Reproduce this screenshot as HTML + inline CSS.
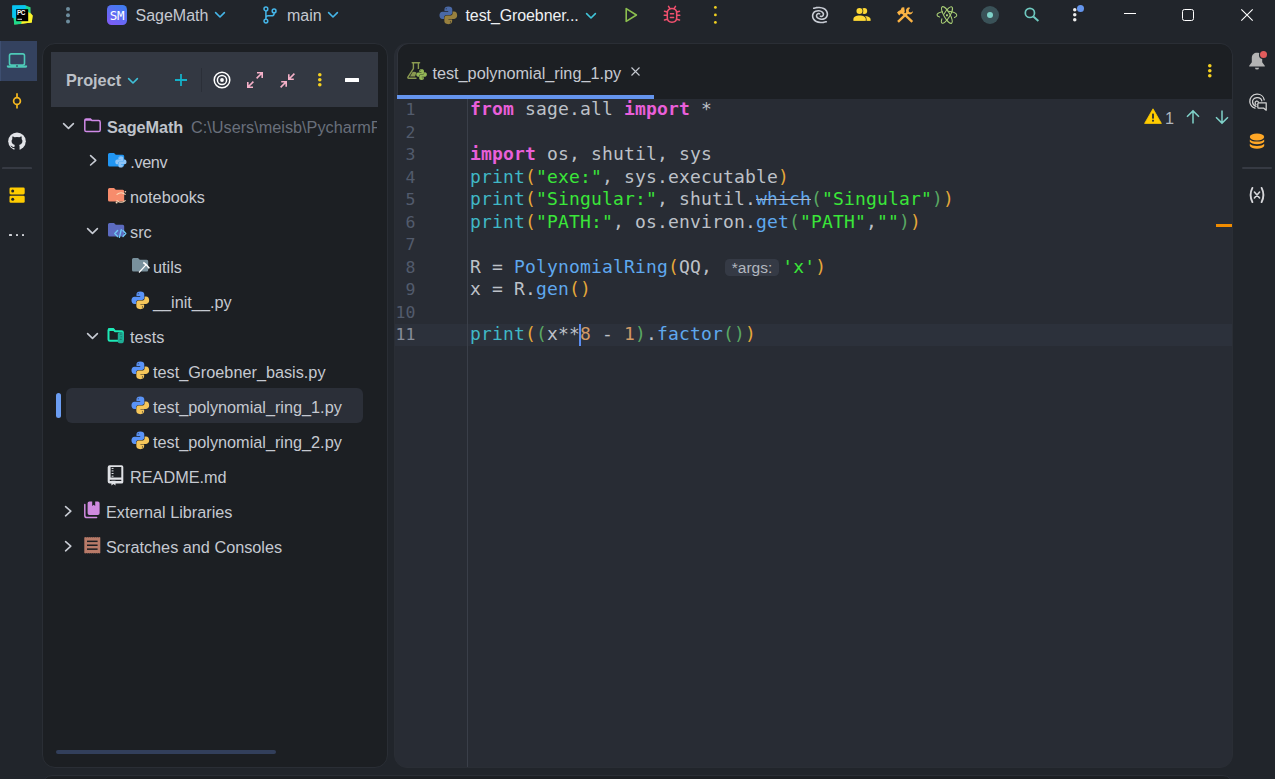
<!DOCTYPE html>
<html lang="en">
<head>
<meta charset="utf-8">
<title>SageMath – test_polynomial_ring_1.py</title>
<style>
*{box-sizing:border-box;margin:0;padding:0}
html,body{width:1275px;height:779px;overflow:hidden;background:#21252b}
body{position:relative;font-family:"Liberation Sans",Arial,sans-serif;font-size:16.25px;color:#c5c9d1;-webkit-font-smoothing:antialiased}
.abs{position:absolute}
.t{position:absolute;white-space:nowrap;line-height:20px;height:20px}
svg{position:absolute;overflow:visible}
/* panels */
#proj{position:absolute;left:42px;top:43px;width:346px;height:725px;background:#1c1f23;border:1px solid #2a2e35;border-radius:13px}
#projhead{position:absolute;left:51px;top:52px;width:327px;height:55px;background:#333842}
#edit{position:absolute;left:394px;top:43px;width:839px;height:725px;background:#282c34;border:1px solid #2a2e35;border-radius:13px;overflow:hidden}
#tabbar{position:absolute;left:2px;top:-1px;width:836px;height:56px;background:#1c1f23;border:1px solid #30343c;border-bottom:0;border-radius:12px 12px 0 0}
#bottom{position:absolute;left:42px;top:775px;width:1191px;height:20px;background:#1c1f23;border:1px solid #2a2e35;border-radius:13px}
.row{position:absolute;left:0;height:35px;width:100%}
.code{font-family:"DejaVu Sans Mono","Liberation Mono",monospace;font-size:18px;letter-spacing:0.163px;color:#bdc1c8}
.ln{position:absolute;left:380px;width:35.5px;text-align:right;font-family:"DejaVu Sans Mono","Liberation Mono",monospace;font-size:16.5px;letter-spacing:.07px;height:22px;line-height:24.600px;white-space:nowrap}
.cl{position:absolute;left:470px;height:22px;line-height:22px;white-space:pre}
.hint{display:inline-block;vertical-align:top;width:54px;height:17px;margin:3px 3.2px 0 2px;background:#353a45;border-radius:4.5px;font-family:"Liberation Sans",Arial,sans-serif;font-size:15.5px;letter-spacing:0;line-height:17.5px;text-align:center;color:#b2b7bf}
.k{color:#e95fd9;font-weight:bold}
.f{color:#40b8c6}
.s{color:#3ae639}
.m{color:#5fa8ee}
.n{color:#d19a66}
.b1{color:#e5a83a}
.b2{color:#5aa863}
</style>
</head>
<body>
<!-- ===== tool window panels ===== -->
<div id="proj"></div>
<div id="projhead"></div>
<div id="edit"><div id="tabbar"></div></div>
<div id="bottom"></div>

<!-- ===== left stripe ===== -->
<div class="abs" style="left:0;top:41px;width:37px;height:40px;background:#34425f"></div>
<div class="abs" style="left:0;top:41px;width:1px;height:40px;background:#3d4e70"></div>
<div class="abs" style="left:2px;top:168px;width:30px;height:1px;background:#353a43"></div>
<svg style="left:6px;top:52px" width="22" height="17" viewBox="0 0 22 17" ><rect x="3.5" y="1.9" width="15" height="11.2" rx="1.8" fill="none" stroke="#4ec9b8" stroke-width="1.6"/><path d="M.9 13.4H21.1V14.2Q21.1 15.7 19.4 15.7H2.6Q.9 15.7 .9 14.2Z" fill="#4ec9b8"/><rect x="10" y="13.4" width="2" height="1.2" fill="#34425f"/></svg>
<svg style="left:10px;top:92px" width="14" height="18" viewBox="0 0 14 18" ><circle cx="7" cy="9" r="3.4" fill="none" stroke="#f5b81f" stroke-width="1.7"/><path d="M7 1.2V5.2M7 12.8V16.6" stroke="#f5b81f" stroke-width="1.7" fill="none"/></svg>
<svg style="left:8px;top:132px" width="18" height="18" viewBox="0 0 18 18" ><circle cx="9" cy="9.2" r="8.8" fill="#e2e4e8"/><path d="M5.2 4.6L6.9 5.6Q9 5.1 11.1 5.6L12.8 4.6Q13.3 6 13 7.1Q14 8.4 13.6 10.2Q13 12.3 10.9 12.8Q11.3 13.6 11.2 14.6V18H6.8V15.6Q5 16 4.3 14.6Q3.9 13.8 3.2 13.5Q4.4 13.2 5 14.1Q5.7 15 6.8 14.6Q6.8 13.4 7.1 12.8Q5 12.3 4.4 10.2Q4 8.4 5 7.1Q4.7 6 5.2 4.6Z" fill="#21252b" transform="translate(9 9.5) scale(1.16 1.06) translate(-9 -9.5)"/></svg>
<div class="abs" style="left:2px;top:167px;width:30px;height:2px;background:#363a43;border-radius:1px"></div>
<svg style="left:9px;top:187px" width="16" height="16" viewBox="0 0 16 16" ><rect x=".5" y=".4" width="15.2" height="7" rx="1.3" fill="#ffcc00"/><rect x=".5" y="8.8" width="15.2" height="7" rx="1.3" fill="#ffcc00"/><circle cx="3.7" cy="3.9" r="1.5" fill="#21252b"/><circle cx="3.7" cy="12.3" r="1.5" fill="#21252b"/></svg>
<div class="abs" style="left:9.4px;top:234px;width:2.4px;height:2.4px;background:#d0d3d8;border-radius:.6px"></div>
<div class="abs" style="left:15.8px;top:234px;width:2.4px;height:2.4px;background:#d0d3d8;border-radius:.6px"></div>
<div class="abs" style="left:22px;top:234px;width:2.4px;height:2.4px;background:#d0d3d8;border-radius:.6px"></div>


<!-- ===== title bar ===== -->
<svg style="left:12px;top:5px" width="21" height="21" viewBox="0 0 21 21" ><defs><linearGradient id="pcg" x1="0" y1="0" x2="1" y2="1"><stop offset="0" stop-color="#07c3f2"/><stop offset=".45" stop-color="#21d789"/><stop offset=".75" stop-color="#fcf52a"/><stop offset="1" stop-color="#fcf52a"/></linearGradient></defs>
<path d="M.3 .4L13.2 .2L18.3 2.3V7.5L20.6 10.5L19.8 17.6L2.2 19.6L1.7 13.2L.3 12.6Z" fill="url(#pcg)"/>
<path d="M.3 .4L13.2 .2L14.5 2.5L4 13.5L.3 12.6Z" fill="#07c3f2"/>
<path d="M14.5 2L18.3 2.3V8L14 6Z" fill="#21d789"/>
<path d="M16 7L20.6 10.5L19.8 17.6L9 18.8Z" fill="#fcf52a"/>
<path d="M1.7 13L9.5 17.2L9 18.9L2.2 19.6Z" fill="#1fd98a"/>
<rect x="4.2" y="4.2" width="12" height="12" fill="#000"/>
<rect x="5.4" y="13.8" width="4.6" height=".9" fill="#fff"/>
<text x="5.1" y="10.3" font-family="Liberation Sans,sans-serif" font-weight="bold" font-size="6.4" letter-spacing="-.5" fill="#fff">PC</text></svg>
<svg style="left:65.4px;top:6.3px" width="6" height="18.6" viewBox="0 0 6 18.6" ><circle cx="3" cy="3" r="2" fill="#6d8d9e"/><circle cx="3" cy="9.3" r="2" fill="#6d8d9e"/><circle cx="3" cy="15.6" r="2" fill="#6d8d9e"/></svg>
<div class="abs" style="left:107px;top:5px;width:20px;height:20px;border-radius:4.5px;background:linear-gradient(30deg,#7d5df6 10%,#3f7cf0 90%)"></div>
<div class="t" style="left:107px;top:5px;width:20px;text-align:center;font-family:'DejaVu Sans Mono','Liberation Mono',monospace;font-size:12.5px;color:#fff;letter-spacing:-.4px;line-height:21px">SM</div>
<div class="t" id="t_sage" style="left:135.500px;top:6px;font-size:16px;color:#c5c9d1">SageMath</div>
<svg style="left:215.2px;top:12.3px" width="10" height="5.6" viewBox="0 0 10 5.6" ><path d="M.6 .6L5 5L9.4 .6" fill="none" stroke="#45b5e8" stroke-width="1.6" stroke-linecap="round" stroke-linejoin="round"/></svg>
<svg style="left:262px;top:6px" width="16" height="18" viewBox="0 0 16 18" ><g fill="none" stroke="#45b5e8" stroke-width="1.5"><circle cx="3.9" cy="3" r="1.9"/><circle cx="3.9" cy="15.1" r="1.9"/><circle cx="12.1" cy="4.9" r="1.9"/><path d="M3.9 4.9V13.2M12.1 6.8V7.4Q12.1 9.8 9.7 9.8H6.3Q3.9 9.8 3.9 12"/></g></svg>
<div class="t" id="t_main" style="left:287px;top:6px;font-size:16px;color:#c5c9d1">main</div>
<svg style="left:328.2px;top:12.3px" width="10" height="5.6" viewBox="0 0 10 5.6" ><path d="M.6 .6L5 5L9.4 .6" fill="none" stroke="#45b5e8" stroke-width="1.6" stroke-linecap="round" stroke-linejoin="round"/></svg>
<svg style="left:439.04px;top:6.04px" width="18.63" height="18.63" viewBox="0 0 16 16" ><path fill-rule="evenodd" fill="#4a69a6" d="M8 .4C5.6 .4 4.7 1.4 4.7 2.8V4.3H7.9V4.9H3C1.4 4.9 .4 6.2 .4 8C.4 9.8 1.4 11.2 3 11.2H4.3V9.8C4.3 8.5 5.3 7.75 6.6 7.75H9.4C10.6 7.75 11.4 6.9 11.4 5.6V2.8C11.4 1.4 10.4 .4 8 .4ZM6.2 1.9A.45 .45 0 1 1 6.2 2.8A.45 .45 0 1 1 6.2 1.9Z"/><path fill-rule="evenodd" fill="#98803e" d="M8 15.6C10.4 15.6 11.3 14.6 11.3 13.2V11.7H8.1V11.1H13C14.6 11.1 15.6 9.8 15.6 8C15.6 6.2 14.6 4.8 13 4.8H11.7V6.2C11.7 7.5 10.7 8.25 9.4 8.25H6.6C5.4 8.25 4.6 9.1 4.6 10.4V13.2C4.6 14.6 5.6 15.6 8 15.6ZM9.8 14.1A.45 .45 0 1 1 9.8 13.2A.45 .45 0 1 1 9.8 14.1Z"/></svg>
<div class="t" id="t_run" style="left:465.500px;top:6px;letter-spacing:-.1px;font-size:16px;color:#eef0f3">test_Groebner...</div>
<svg style="left:586px;top:13px" width="10" height="5.6" viewBox="0 0 10 5.6" ><path d="M.6 .6L5 5L9.4 .6" fill="none" stroke="#40c4d8" stroke-width="1.6" stroke-linecap="round" stroke-linejoin="round"/></svg>
<svg style="left:624px;top:7px" width="14" height="16" viewBox="0 0 14 16" ><path d="M2.2 1.6L12.4 8L2.2 14.4Z" fill="none" stroke="#8cbf4f" stroke-width="1.6" stroke-linejoin="round"/></svg>
<svg style="left:663px;top:5px" width="18" height="19" viewBox="0 0 18 19" ><g fill="none" stroke="#f0506e" stroke-width="1.500" stroke-linecap="round"><path d="M9 3.400C11.800 3.400 13.700 5.400 13.700 8.200V12.600C13.700 15.400 11.800 17.300 9 17.300C6.200 17.300 4.300 15.400 4.300 12.600V8.200C4.300 5.400 6.200 3.400 9 3.400Z"/><path d="M7 3.600L5.500 1.300M11 3.600L12.500 1.300M4.300 7L1.500 6.200M4.300 10.200H1.200M4.300 14.200L1.500 15M13.700 7L16.500 6.200M13.700 10.200H16.800M13.700 14.200L16.500 15M7.400 8.700H10.600M7.400 12.400H10.600"/></g></svg>
<svg style="left:712.6px;top:5.1px" width="4.8" height="19.8" viewBox="0 0 4.8 19.8" ><circle cx="2.4" cy="2.4" r="1.4" fill="#f0d020"/><circle cx="2.4" cy="9.9" r="1.4" fill="#f0d020"/><circle cx="2.4" cy="17.4" r="1.4" fill="#f0d020"/></svg>
<svg style="left:811px;top:6px" width="18" height="18" viewBox="0 0 18 18" ><path d="M2.70 2.30C3.08 2.20 4.07 1.83 5.00 1.70C5.93 1.57 7.02 1.37 8.30 1.50C9.58 1.63 11.53 1.97 12.70 2.50C13.87 3.03 14.68 3.78 15.30 4.70C15.92 5.62 16.37 6.95 16.40 8.00C16.43 9.05 16.02 10.20 15.50 11.00C14.98 11.80 14.22 12.43 13.30 12.80C12.38 13.17 11.05 13.30 10.00 13.20C8.95 13.10 7.73 12.70 7.00 12.20C6.27 11.70 5.77 10.83 5.60 10.20C5.43 9.57 5.70 8.85 6.00 8.40C6.30 7.95 6.97 7.60 7.40 7.50C7.83 7.40 8.40 7.75 8.60 7.80M15.30 15.70C14.92 15.80 13.93 16.17 13.00 16.30C12.07 16.43 10.98 16.63 9.70 16.50C8.42 16.37 6.47 16.03 5.30 15.50C4.13 14.97 3.32 14.22 2.70 13.30C2.08 12.38 1.63 11.05 1.60 10.00C1.57 8.95 1.98 7.80 2.50 7.00C3.02 6.20 3.78 5.57 4.70 5.20C5.62 4.83 6.95 4.70 8.00 4.80C9.05 4.90 10.27 5.30 11.00 5.80C11.73 6.30 12.23 7.17 12.40 7.80C12.57 8.43 12.30 9.15 12.00 9.60C11.70 10.05 11.03 10.40 10.60 10.50C10.17 10.60 9.60 10.25 9.40 10.20" fill="none" stroke="#c8ccd4" stroke-width="1.6" stroke-linecap="round" stroke-linejoin="round"/></svg>
<svg style="left:853px;top:7px" width="18" height="15" viewBox="0 0 18 15" ><g fill="#fdd835"><circle cx="11.300" cy="4" r="2.900"/><path d="M10.500 8.900C14.500 8.700 17.600 10.100 17.600 12.400V13.900H10.500Z"/><g stroke="#21252b" stroke-width="1.500" paint-order="stroke"><circle cx="6.500" cy="4" r="3.050"/><path d="M.4 13.900V12.200C.4 10 3 8.600 6.600 8.600C10.200 8.600 12.800 10 12.800 12.200V13.900Z"/></g><rect x="0" y="13.9" width="18" height="1.100" fill="#21252b"/></g></svg>
<svg style="left:896px;top:6px" width="18" height="18" viewBox="0 0 18 18" ><g fill="none" stroke="#fbb344" stroke-linecap="butt"><path d="M2 15.900L11.600 6.600" stroke-width="2.400"/><path d="M16.300 15.900L6.400 6.400" stroke-width="2.400"/></g><path d="M1 6.400L3.200 9.400L5 7.600L6.600 8.200L8.800 5.400L8.200 1.300L5.800 1.600L4.600 4L2.600 5Z" fill="#fbb344"/><path d="M13.200 1.200A3.300 3.300 0 0 0 10.400 6.200L12.200 8A3.300 3.300 0 0 0 17 5.200L15 6.400L13 6L12.600 4L13.900 2.200Q13.600 1.200 13.200 1.200Z" fill="#fbb344"/></svg>
<svg style="left:936px;top:5px" width="22" height="20" viewBox="0 0 22 20" ><g fill="none" stroke="#a9cf76" stroke-width="1.050" stroke-linecap="round"><ellipse cx="10.900" cy="10" rx="3" ry="9.500" transform="rotate(-30 10.900 10)"/><ellipse cx="10.900" cy="10" rx="3" ry="9.500" transform="rotate(31 10.900 10)" stroke-dasharray="15 5 40 0"/><path d="M6.400 6.700C3.400 7.300 1 8.600 1 9.900C1 10.700 2 11.400 3.600 12M12 6.300C16.500 6.700 20.600 8.200 20.800 10.200C20.800 11.200 19.800 12 18.400 12.600"/></g><rect x="10" y="9.300" width="1.900" height="1.900" rx=".5" fill="#b0d878"/></svg>
<div class="abs" style="left:981px;top:6px;width:18px;height:18px;border-radius:50%;background:#3a5258"></div><div class="abs" style="left:986.7px;top:11.7px;width:6.6px;height:6.6px;border-radius:50%;background:#7fd1c8"></div>
<svg style="left:1023px;top:7px" width="18" height="17" viewBox="0 0 18 17" ><g fill="none" stroke="#6fc9c0" stroke-linecap="butt"><circle cx="6.900" cy="5.900" r="4.600" stroke-width="1.700"/><path d="M10.300 9.400L15.400 13.900" stroke-width="2"/></g></svg>
<svg style="left:1072.25px;top:7.25px" width="5.5" height="15.5" viewBox="0 0 5.5 15.5" ><circle cx="2.75" cy="2.75" r="1.75" fill="#ececec"/><circle cx="2.75" cy="7.75" r="1.75" fill="#ececec"/><circle cx="2.75" cy="12.75" r="1.75" fill="#ececec"/></svg>
<div class="abs" style="left:1076.600px;top:4.200px;width:8.600px;height:8.600px;border-radius:50%;background:#21252b"></div>
<div class="abs" style="left:1077.300px;top:4.900px;width:7.200px;height:7.200px;border-radius:50%;background:#6495ed"></div>
<div class="abs" style="left:1124px;top:13px;width:12px;height:1px;background:#fff"></div>
<div class="abs" style="left:1182px;top:9px;width:12px;height:12px;border:1.2px solid #fff;border-radius:2.5px"></div>
<svg style="left:1241px;top:9px" width="12" height="12" viewBox="0 0 12 12" ><path d="M.3 .3L11.7 11.7M11.7 .3L.3 11.7" stroke="#fff" stroke-width="1.1" fill="none"/></svg>


<!-- ===== project header ===== -->
<div class="t" id="t_proj" style="left:66px;top:70px;font-weight:bold;color:#bcc0c7">Project</div>
<svg style="left:128px;top:78.2px" width="10" height="5.6" viewBox="0 0 10 5.6" ><path d="M.6 .6L5 5L9.4 .6" fill="none" stroke="#3fc0d8" stroke-width="1.6" stroke-linecap="round" stroke-linejoin="round"/></svg>
<svg style="left:175px;top:74px" width="12" height="12" viewBox="0 0 12 12" ><path d="M6 0V12M0 6H12" stroke="#14b0c8" stroke-width="1.8" fill="none"/></svg>
<div class="abs" style="left:201px;top:68px;width:1px;height:24px;background:#2b2f38"></div>
<svg style="left:213px;top:71px" width="18" height="18" viewBox="0 0 18 18" ><g fill="none" stroke="#fff" stroke-width="1.5"><circle cx="9" cy="9" r="7.8"/><circle cx="9" cy="9" r="4.6"/></g><circle cx="9" cy="9" r="1.9" fill="#fff"/></svg>
<svg style="left:247px;top:72px" width="16" height="16" viewBox="0 0 16 16" ><g fill="none" stroke="#f5b0c8" stroke-width="1.6"><path d="M9.6 6.4L15.2 .8M10 .8H15.2V6M6.4 9.6L.8 15.2M.8 10V15.2H6"/></g></svg>
<svg style="left:279.5px;top:72.5px" width="15" height="15" viewBox="0 0 15 15" ><g fill="none" stroke="#f5b0c8" stroke-width="1.6"><path d="M14.4 .6L8.8 6.2M8.8 1.2V6.2H13.8M.6 14.4L6.2 8.8M1.2 8.8H6.2V13.8"/></g></svg>
<svg style="left:317.2px;top:72.2px" width="5.6" height="15.6" viewBox="0 0 5.6 15.6" ><circle cx="2.8" cy="2.8" r="1.8" fill="#f5d020"/><circle cx="2.8" cy="7.8" r="1.8" fill="#f5d020"/><circle cx="2.8" cy="12.8" r="1.8" fill="#f5d020"/></svg>
<div class="abs" style="left:345px;top:78px;width:14px;height:4px;background:#fff;border-radius:.5px"></div>


<!-- ===== project tree ===== -->
<div class="abs" style="left:66px;top:388px;width:297px;height:35px;background:#2b2f38;border-radius:6px"></div>
<div class="abs" style="left:56px;top:393px;width:5px;height:25px;background:#6b9df2;border-radius:2.5px"></div>
<svg style="left:63px;top:122.8px" width="11" height="6" viewBox="0 0 11 6" ><path d="M.6 .6L5.5 5.4L10.4 .6" fill="none" stroke="#c8ccd4" stroke-width="1.6" stroke-linecap="round" stroke-linejoin="round"/></svg>
<svg style="left:83.5px;top:118px" width="17.5" height="14.5" viewBox="0 0 17.5 14.5" ><path d="M2.2 .9H6.4L7.9 2.6H14.6Q16.2 2.6 16.2 4.2V12Q16.2 13.6 14.6 13.6H2.4Q.8 13.6 .8 12V2.3Q.8 .9 2.2 .9Z" fill="none" stroke="#d08ae8" stroke-width="1.5"/><path d="M1 1H6.6L8 2.8H1Z" fill="#d08ae8"/></svg>
<div class="t" style="left:107px;top:117px;font-weight:bold;color:#bfc3cb;letter-spacing:-.08px">SageMath</div>
<div class="t" style="left:191px;top:117px;color:#696f7b;width:185.500px;overflow:hidden">C:\Users\meisb\PycharmProjects\SageMath</div>
<svg style="left:89.5px;top:155.2px" width="6.4" height="10.6" viewBox="0 0 6.4 10.6" ><path d="M.6 .6L5.8 5.3L.6 10" fill="none" stroke="#c8ccd4" stroke-width="1.6" stroke-linecap="round" stroke-linejoin="round"/></svg>
<svg style="left:107.6px;top:153.2px" width="16.7" height="13.5" viewBox="0 0 16.7 13.5" ><path d="M1.5 0H6L7.8 1.8H14.7Q16.2 1.8 16.2 3.3V12Q16.2 13.5 14.7 13.5H1.5Q0 13.5 0 12V1.5Q0 0 1.5 0Z" fill="#2196f3"/></svg>
<svg style="left:114.725px;top:156.125px" width="11.799" height="11.799" viewBox="0 0 16 16" ><path fill-rule="evenodd" fill="#8ec5f8" d="M8 .4C5.6 .4 4.7 1.4 4.7 2.8V4.3H7.9V4.9H3C1.4 4.9 .4 6.2 .4 8C.4 9.8 1.4 11.2 3 11.2H4.3V9.8C4.3 8.5 5.3 7.75 6.6 7.75H9.4C10.6 7.75 11.4 6.9 11.4 5.6V2.8C11.4 1.4 10.4 .4 8 .4ZM6.2 1.9A.45 .45 0 1 1 6.2 2.8A.45 .45 0 1 1 6.2 1.9Z"/><path fill-rule="evenodd" fill="#8ec5f8" d="M8 15.6C10.4 15.6 11.3 14.6 11.3 13.2V11.7H8.1V11.1H13C14.6 11.1 15.6 9.8 15.6 8C15.6 6.2 14.6 4.8 13 4.8H11.7V6.2C11.7 7.5 10.7 8.25 9.4 8.25H6.6C5.4 8.25 4.6 9.1 4.6 10.4V13.2C4.6 14.6 5.6 15.6 8 15.6ZM9.8 14.1A.45 .45 0 1 1 9.8 13.2A.45 .45 0 1 1 9.8 14.1Z"/></svg>
<div class="t" style="left:130.3px;top:152px;letter-spacing:-.4px">.venv</div>
<svg style="left:107.5px;top:188.2px" width="16.7" height="13.5" viewBox="0 0 16.7 13.5" ><path d="M1.5 0H6L7.8 1.8H14.7Q16.2 1.8 16.2 3.3V12Q16.2 13.5 14.7 13.5H1.5Q0 13.5 0 12V1.5Q0 0 1.5 0Z" fill="#f78c6c"/></svg>
<svg style="left:114.8px;top:190.4px" width="12" height="14" viewBox="0 0 12 14" ><g fill="none" stroke="#fbd9b8" stroke-width="1.1" stroke-linecap="round"><path d="M2 4.4Q6 1 10.2 4.4"/><path d="M2 10.6Q6 14 10.2 10.6"/></g><circle cx="1.6" cy="12.6" r="1" fill="#fbd9b8"/><circle cx="10.4" cy="1.8" r=".8" fill="#fbd9b8"/></svg>
<div class="t" style="left:130px;top:187px;">notebooks</div>
<svg style="left:87.2px;top:227.8px" width="11" height="6" viewBox="0 0 11 6" ><path d="M.6 .6L5.5 5.4L10.4 .6" fill="none" stroke="#c8ccd4" stroke-width="1.6" stroke-linecap="round" stroke-linejoin="round"/></svg>
<svg style="left:107.5px;top:223.2px" width="16.7" height="13.5" viewBox="0 0 16.7 13.5" ><path d="M1.5 0H6L7.8 1.8H14.7Q16.2 1.8 16.2 3.3V12Q16.2 13.5 14.7 13.5H1.5Q0 13.5 0 12V1.5Q0 0 1.5 0Z" fill="#5c6bc0"/></svg>
<svg style="left:113.6px;top:228.6px" width="12.6" height="9.2" viewBox="0 0 12.6 9.2" ><g fill="none" stroke="#6fc8f5" stroke-width="1.4" stroke-linecap="round" stroke-linejoin="round"><path d="M3.6 1.6L.8 4.6L3.6 7.6M9 1.6L11.8 4.6L9 7.6M7.2 .8L5.4 8.4"/></g></svg>
<div class="t" style="left:130px;top:222px;">src</div>
<svg style="left:131.8px;top:258.3px" width="16.7" height="13.5" viewBox="0 0 16.7 13.5" ><path d="M1.5 0H6L7.8 1.8H14.7Q16.2 1.8 16.2 3.3V12Q16.2 13.5 14.7 13.5H1.5Q0 13.5 0 12V1.5Q0 0 1.5 0Z" fill="#78909c"/></svg>
<svg style="left:138px;top:260px" width="12" height="13" viewBox="0 0 12 13" ><g fill="none" stroke="#fff" stroke-linecap="butt"><path d="M1 12.500L8 4.900" stroke-width="1.200"/><path d="M5.300 2.400Q9.200 4.600 11.300 8.400" stroke-width="1.700"/></g></svg>
<div class="t" style="left:153px;top:257px;">utils</div>
<svg style="left:131.04px;top:291.04px" width="18.63" height="18.63" viewBox="0 0 16 16" ><path fill-rule="evenodd" fill="#5a93f6" d="M8 .4C5.6 .4 4.7 1.4 4.7 2.8V4.3H7.9V4.9H3C1.4 4.9 .4 6.2 .4 8C.4 9.8 1.4 11.2 3 11.2H4.3V9.8C4.3 8.5 5.3 7.75 6.6 7.75H9.4C10.6 7.75 11.4 6.9 11.4 5.6V2.8C11.4 1.4 10.4 .4 8 .4ZM6.2 1.9A.45 .45 0 1 1 6.2 2.8A.45 .45 0 1 1 6.2 1.9Z"/><path fill-rule="evenodd" fill="#f5c65a" d="M8 15.6C10.4 15.6 11.3 14.6 11.3 13.2V11.7H8.1V11.1H13C14.6 11.1 15.6 9.8 15.6 8C15.6 6.2 14.6 4.8 13 4.8H11.7V6.2C11.7 7.5 10.7 8.25 9.4 8.25H6.6C5.4 8.25 4.6 9.1 4.6 10.4V13.2C4.6 14.6 5.6 15.6 8 15.6ZM9.8 14.1A.45 .45 0 1 1 9.8 13.2A.45 .45 0 1 1 9.8 14.1Z"/></svg>
<div class="t" style="left:153px;top:292px;">__init__.py</div>
<svg style="left:87.2px;top:332.8px" width="11" height="6" viewBox="0 0 11 6" ><path d="M.6 .6L5.5 5.4L10.4 .6" fill="none" stroke="#c8ccd4" stroke-width="1.6" stroke-linecap="round" stroke-linejoin="round"/></svg>
<svg style="left:107.3px;top:328px" width="17.5" height="15.5" viewBox="0 0 17.5 15.5" ><path d="M2.700 1.100H6.300L7.900 3.200H14.500Q15.900 3.200 15.900 4.600V11.400Q15.900 12.800 14.500 12.800H2.900Q1.500 12.800 1.500 11.400V2.300Q1.500 1.100 2.700 1.100Z" fill="none" stroke="#1de9b6" stroke-width="2" stroke-linejoin="round"/><path d="M1 .6H6.800L8.400 3H1Z" fill="#1de9b6"/><rect x="10.800" y="4.200" width="5.900" height="11" rx="1.600" fill="#1fae96"/><rect x="12.600" y="5.600" width="2.200" height="1.100" rx=".5" fill="#17806f"/><rect x="13.400" y="8.200" width="1.800" height="1.100" rx=".5" fill="#17806f"/><rect x="12.600" y="10.800" width="2.200" height="1.100" rx=".5" fill="#17806f"/></svg>
<div class="t" style="left:130px;top:327px;">tests</div>
<svg style="left:131.04px;top:361.04px" width="18.63" height="18.63" viewBox="0 0 16 16" ><path fill-rule="evenodd" fill="#5a93f6" d="M8 .4C5.6 .4 4.7 1.4 4.7 2.8V4.3H7.9V4.9H3C1.4 4.9 .4 6.2 .4 8C.4 9.8 1.4 11.2 3 11.2H4.3V9.8C4.3 8.5 5.3 7.75 6.6 7.75H9.4C10.6 7.75 11.4 6.9 11.4 5.6V2.8C11.4 1.4 10.4 .4 8 .4ZM6.2 1.9A.45 .45 0 1 1 6.2 2.8A.45 .45 0 1 1 6.2 1.9Z"/><path fill-rule="evenodd" fill="#f5c65a" d="M8 15.6C10.4 15.6 11.3 14.6 11.3 13.2V11.7H8.1V11.1H13C14.6 11.1 15.6 9.8 15.6 8C15.6 6.2 14.6 4.8 13 4.8H11.7V6.2C11.7 7.5 10.7 8.25 9.4 8.25H6.6C5.4 8.25 4.6 9.1 4.6 10.4V13.2C4.6 14.6 5.6 15.6 8 15.6ZM9.8 14.1A.45 .45 0 1 1 9.8 13.2A.45 .45 0 1 1 9.8 14.1Z"/></svg>
<div class="t" style="left:153px;top:362px;">test_Groebner_basis.py</div>
<svg style="left:131.04px;top:396.04px" width="18.63" height="18.63" viewBox="0 0 16 16" ><path fill-rule="evenodd" fill="#5a93f6" d="M8 .4C5.6 .4 4.7 1.4 4.7 2.8V4.3H7.9V4.9H3C1.4 4.9 .4 6.2 .4 8C.4 9.8 1.4 11.2 3 11.2H4.3V9.8C4.3 8.5 5.3 7.75 6.6 7.75H9.4C10.6 7.75 11.4 6.9 11.4 5.6V2.8C11.4 1.4 10.4 .4 8 .4ZM6.2 1.9A.45 .45 0 1 1 6.2 2.8A.45 .45 0 1 1 6.2 1.9Z"/><path fill-rule="evenodd" fill="#f5c65a" d="M8 15.6C10.4 15.6 11.3 14.6 11.3 13.2V11.7H8.1V11.1H13C14.6 11.1 15.6 9.8 15.6 8C15.6 6.2 14.6 4.8 13 4.8H11.7V6.2C11.7 7.5 10.7 8.25 9.4 8.25H6.6C5.4 8.25 4.6 9.1 4.6 10.4V13.2C4.6 14.6 5.6 15.6 8 15.6ZM9.8 14.1A.45 .45 0 1 1 9.8 13.2A.45 .45 0 1 1 9.8 14.1Z"/></svg>
<div class="t" style="left:153px;top:397px;">test_polynomial_ring_1.py</div>
<svg style="left:131.04px;top:431.04px" width="18.63" height="18.63" viewBox="0 0 16 16" ><path fill-rule="evenodd" fill="#5a93f6" d="M8 .4C5.6 .4 4.7 1.4 4.7 2.8V4.3H7.9V4.9H3C1.4 4.9 .4 6.2 .4 8C.4 9.8 1.4 11.2 3 11.2H4.3V9.8C4.3 8.5 5.3 7.75 6.6 7.75H9.4C10.6 7.75 11.4 6.9 11.4 5.6V2.8C11.4 1.4 10.4 .4 8 .4ZM6.2 1.9A.45 .45 0 1 1 6.2 2.8A.45 .45 0 1 1 6.2 1.9Z"/><path fill-rule="evenodd" fill="#f5c65a" d="M8 15.6C10.4 15.6 11.3 14.6 11.3 13.2V11.7H8.1V11.1H13C14.6 11.1 15.6 9.8 15.6 8C15.6 6.2 14.6 4.8 13 4.8H11.7V6.2C11.7 7.5 10.7 8.25 9.4 8.25H6.6C5.4 8.25 4.6 9.1 4.6 10.4V13.2C4.6 14.6 5.6 15.6 8 15.6ZM9.8 14.1A.45 .45 0 1 1 9.8 13.2A.45 .45 0 1 1 9.8 14.1Z"/></svg>
<div class="t" style="left:153px;top:432px;">test_polynomial_ring_2.py</div>
<svg style="left:107.1px;top:464.5px" width="17" height="21" viewBox="0 0 17 21" ><path fill-rule="evenodd" fill="#dfe1e5" d="M2.700 .3H14.600Q16.300 .3 16.300 2V16.900Q16.300 18.600 14.600 18.600H2.700Q.7 18.600 .7 16.600V2.300Q.7 .3 2.700 .3ZM3.600 1.900V12.600H14.300V1.900ZM2.800 14.650V16.100H14.300V14.650Z"/><path d="M4.400 15.700H8.500V20.600L6.450 19L4.400 20.600Z" fill="#dfe1e5"/><g fill="#dfe1e5"><rect x="4.600" y="2.900" width="1.900" height="1"/><rect x="4.600" y="5.400" width="1.900" height="1"/><rect x="4.600" y="8" width="1.900" height="1"/><rect x="4.600" y="10.700" width="1.900" height="1"/></g></svg>
<div class="t" style="left:130px;top:467px;">README.md</div>
<svg style="left:65.2px;top:505.8px" width="6.4" height="10.4" viewBox="0 0 6.4 10.4" ><path d="M.6 .6L5.8 5.2L.6 9.8" fill="none" stroke="#c8ccd4" stroke-width="1.6" stroke-linecap="round" stroke-linejoin="round"/></svg>
<svg style="left:83.8px;top:501px" width="17" height="18" viewBox="0 0 17 18" ><path d="M5.4 .4H8.2V5L9.700 3.800L11.200 5V.4H13.800Q15.600 .4 15.600 2.200V12.200Q15.600 14 13.800 14H5.400Q3.600 14 3.600 12.200V2.200Q3.600 .4 5.400 .4Z" fill="#d08ae0"/><path d="M.8 3.6V14.4Q.8 16.6 3 16.6H12.6" fill="none" stroke="#d08ae0" stroke-width="1.5" stroke-linecap="round"/></svg>
<div class="t" style="left:106px;top:502px;">External Libraries</div>
<svg style="left:65.2px;top:540.8px" width="6.4" height="10.4" viewBox="0 0 6.4 10.4" ><path d="M.6 .6L5.8 5.2L.6 9.8" fill="none" stroke="#c8ccd4" stroke-width="1.6" stroke-linecap="round" stroke-linejoin="round"/></svg>
<svg style="left:83.8px;top:536.5px" width="16.6" height="16.6" viewBox="0 0 16.6 16.6" ><path d="M.3 .6L1.3 0L2.3 .6L3.3 0L4.3 .6L5.3 0L6.3 .6L7.3 0L8.3 .6L9.3 0L10.3 .6L11.3 0L12.3 .6L13.3 0L14.3 .6L15.3 0L16.3 .6V16L15.3 16.6L14.3 16L13.3 16.6L12.3 16L11.3 16.6L10.3 16L9.3 16.6L8.3 16L7.3 16.6L6.3 16L5.3 16.6L4.3 16L3.3 16.6L2.3 16L1.3 16.6L.3 16Z" fill="#b87a68"/><g fill="#1c1e22"><rect x="3" y="3.6" width="10.6" height="1.5"/><rect x="3" y="7.5" width="10.6" height="1.5"/><rect x="3" y="11.4" width="10.6" height="1.5"/></g></svg>
<div class="t" style="left:106px;top:537px;">Scratches and Consoles</div>
<div class="abs" style="left:56px;top:750px;width:220px;height:4px;background:#323f5b;border-radius:2px"></div>


<!-- ===== editor ===== -->
<div class="abs" style="left:395px;top:324px;width:837px;height:22px;background:#2c313b"></div>
<div class="abs" style="left:467px;top:99px;width:1px;height:668px;background:#3a3f49"></div>
<div class="abs" style="left:397px;top:95px;width:257px;height:4px;background:#6494ed"></div>
<svg style="left:406.5px;top:61.5px" width="14" height="17.5" viewBox="0 0 14 17.5" ><path d="M5.2 .8H12.6M6.4 .8V6.6L.9 15.2Q.5 16.2 1.6 16.2H9" fill="none" stroke="#8a9a50" stroke-width="1.4" stroke-linecap="round" stroke-linejoin="round"/><path d="M11.4 .8V7" fill="none" stroke="#8a9a50" stroke-width="1.4"/><path d="M5.6 10L3 14.4H8L9.4 10.4Q7.6 9.4 5.6 10Z" fill="#8a9a50"/></svg>
<svg style="left:416.224px;top:69.324px" width="11.178" height="11.178" viewBox="0 0 16 16" ><path fill-rule="evenodd" fill="#94b856" d="M8 .4C5.6 .4 4.7 1.4 4.7 2.8V4.3H7.9V4.9H3C1.4 4.9 .4 6.2 .4 8C.4 9.8 1.4 11.2 3 11.2H4.3V9.8C4.3 8.5 5.3 7.75 6.6 7.75H9.4C10.6 7.75 11.4 6.9 11.4 5.6V2.8C11.4 1.4 10.4 .4 8 .4ZM6.2 1.9A.45 .45 0 1 1 6.2 2.8A.45 .45 0 1 1 6.2 1.9Z"/><path fill-rule="evenodd" fill="#94b856" d="M8 15.6C10.4 15.6 11.3 14.6 11.3 13.2V11.7H8.1V11.1H13C14.6 11.1 15.6 9.8 15.6 8C15.6 6.2 14.6 4.8 13 4.8H11.7V6.2C11.7 7.5 10.7 8.25 9.4 8.25H6.6C5.4 8.25 4.6 9.1 4.6 10.4V13.2C4.6 14.6 5.6 15.6 8 15.6ZM9.8 14.1A.45 .45 0 1 1 9.8 13.2A.45 .45 0 1 1 9.8 14.1Z"/></svg>
<div class="t" id="t_tab" style="left:432.400px;top:63px;color:#c5c9d1">test_polynomial_ring_1.py</div>
<svg style="left:630.5px;top:67px" width="9" height="9" viewBox="0 0 9 9" ><path d="M.5 .5L8.5 8.5M8.5 .5L.5 8.5" stroke="#c5c9d1" stroke-width="1.1" fill="none"/></svg>
<svg style="left:1207.2px;top:63.2px" width="5.6" height="15.6" viewBox="0 0 5.6 15.6" ><circle cx="2.8" cy="2.8" r="1.8" fill="#f5d020"/><circle cx="2.8" cy="7.8" r="1.8" fill="#f5d020"/><circle cx="2.8" cy="12.8" r="1.8" fill="#f5d020"/></svg>
<div class="ln" style="top:98px;color:#525b6c">1</div>
<div class="cl code" id="L1" style="top:98px"><span class="k">from</span> sage.all <span class="k">import</span> *</div>
<div class="ln" style="top:121px;color:#525b6c">2</div>
<div class="ln" style="top:143px;color:#525b6c">3</div>
<div class="cl code" id="L3" style="top:143px"><span class="k">import</span> os, shutil, sys</div>
<div class="ln" style="top:166px;color:#525b6c">4</div>
<div class="cl code" id="L4" style="top:166px"><span class="f">print</span><span class="b1">(</span><span class="s">"exe:"</span>, sys.executable<span class="b1">)</span></div>
<div class="ln" style="top:188px;color:#525b6c">5</div>
<div class="cl code" id="L5" style="top:188px"><span class="f">print</span><span class="b1">(</span><span class="s">"Singular:"</span>, shutil.<span class="m" style="text-decoration:line-through;text-decoration-thickness:1px;text-decoration-color:#b4b9c2">which</span><span class="b2">(</span><span class="s">"Singular"</span><span class="b2">)</span><span class="b1">)</span></div>
<div class="ln" style="top:211px;color:#525b6c">6</div>
<div class="cl code" id="L6" style="top:211px"><span class="f">print</span><span class="b1">(</span><span class="s">"PATH:"</span>, os.environ.<span class="m">get</span><span class="b2">(</span><span class="s">"PATH"</span>,<span class="s">""</span><span class="b2">)</span><span class="b1">)</span></div>
<div class="ln" style="top:233px;color:#525b6c">7</div>
<div class="ln" style="top:256px;color:#525b6c">8</div>
<div class="cl code" id="L8" style="top:256px">R = <span class="m">PolynomialRing</span><span class="b1">(</span>QQ, <span class="hint">*args:</span><span class="s">'x'</span><span class="b1">)</span></div>
<div class="ln" style="top:278px;color:#525b6c">9</div>
<div class="cl code" id="L9" style="top:278px">x = R.<span class="m">gen</span><span class="b1">(</span><span class="b1">)</span></div>
<div class="ln" style="top:301px;color:#525b6c">10</div>
<div class="ln" style="top:323px;color:#868c98">11</div>
<div class="cl code" id="L11" style="top:323px"><span class="f">print</span><span class="b1">(</span><span class="b2">(</span>x**<span class="n">8</span> - <span class="n">1</span><span class="b2">)</span>.<span class="m">factor</span><span class="b2">(</span><span class="b2">)</span><span class="b1">)</span></div>
<div class="abs" style="left:579px;top:324px;width:2px;height:22px;background:#5b8def"></div>
<div class="abs" style="left:1216px;top:224px;width:16px;height:3px;background:#f08c00"></div>
<svg style="left:1144px;top:108px" width="18" height="16" viewBox="0 0 18 16" ><path d="M9 .8L17.4 15.4H.6Z" fill="#ffcc00" stroke="#ffcc00" stroke-width=".8" stroke-linejoin="round"/><rect x="8.1" y="5.6" width="1.8" height="5" fill="#282c34"/><rect x="8.1" y="11.8" width="1.8" height="1.8" fill="#282c34"/></svg>
<div class="t" id="t_one" style="left:1165px;top:108px;color:#b0b5bd">1</div>
<svg style="left:1186px;top:109.5px" width="14" height="14" viewBox="0 0 14 14" ><path d="M7 13.4V1.2M1 6.8L7 .9L13 6.8" fill="none" stroke="#7fd1c8" stroke-width="1.5"/></svg>
<svg style="left:1215px;top:109.5px" width="14" height="14" viewBox="0 0 14 14" ><path d="M7 .6V12.8M1 7.2L7 13.1L13 7.2" fill="none" stroke="#7fd1c8" stroke-width="1.5"/></svg>


<!-- ===== right stripe ===== -->
<svg style="left:1248px;top:52px" width="18" height="19" viewBox="0 0 18 19" ><path d="M9 .8C12 .8 14.200 2.800 14.200 5.800V10.200L16.800 13.700V14.500H1.200V13.700L3.800 10.200V5.800C3.800 2.800 6 .8 9 .8Z" fill="#b4b4b4"/><path d="M7 15.700H11Q11 17.600 9 17.600Q7 17.600 7 15.700Z" fill="#b4b4b4"/></svg>
<div class="abs" style="left:1259.200px;top:50.600px;width:8.400px;height:8.400px;border-radius:50%;background:#21252b"></div>
<div class="abs" style="left:1260px;top:51.400px;width:7px;height:7px;border-radius:50%;background:#e25c5c"></div>
<svg style="left:1249px;top:93px" width="19" height="18" viewBox="0 0 19 18" ><g fill="none" stroke="#d4d4d4" stroke-width="1.250" stroke-linecap="round"><path d="M9.400 9.400C9.400 8.300 8.200 7.800 7.200 8.200C5.800 8.800 5.800 10.600 7 11.400"/><path d="M12.800 7.800C12.400 5.800 10.400 4.400 7.800 4.600C5 4.800 3.200 7 3.600 9.400C3.800 11.200 5 12.600 7 13.400"/><path d="M15.200 6.800C14.600 3.400 11.600 1 7.800 1.200C3.400 1.400 .4 4.800 .8 9C1.200 12 3 14.200 6 15.200"/><path d="M9.800 9.800H17.200V17.200L14.800 15.200H9.800Q8.800 15.200 8.800 14.200V10.800Q8.800 9.800 9.800 9.800Z" stroke-linejoin="round" fill="#21252b"/></g></svg>
<svg style="left:1249px;top:133px" width="16" height="17" viewBox="0 0 16 17" ><g fill="#ffa726"><ellipse cx="8" cy="4" rx="7.2" ry="3.4"/><path d="M.8 6.4Q3 8.6 8 8.6Q13 8.6 15.2 6.4V8.8Q13.4 11.2 8 11.2Q2.600 11.2 .8 8.8Z"/><path d="M.8 10.8Q3 13 8 13Q13 13 15.200 10.8V13Q13.4 15.800 8 15.800Q2.600 15.800 .8 13Z"/></g></svg>
<div class="abs" style="left:1242px;top:167px;width:30px;height:2px;background:#363a43;border-radius:1px"></div>
<svg style="left:1248px;top:187px" width="18" height="16" viewBox="0 0 18 16" ><g fill="none" stroke="#d6d6da" stroke-linecap="round"><path d="M4.400 .9Q.8 8 4.400 15.100M13.600 .9Q17.200 8 13.600 15.100" stroke-width="1.900"/><path d="M6.400 5L11.600 11M11.600 5L6.400 11" stroke-width="1.600"/></g></svg>

</body>
</html>
